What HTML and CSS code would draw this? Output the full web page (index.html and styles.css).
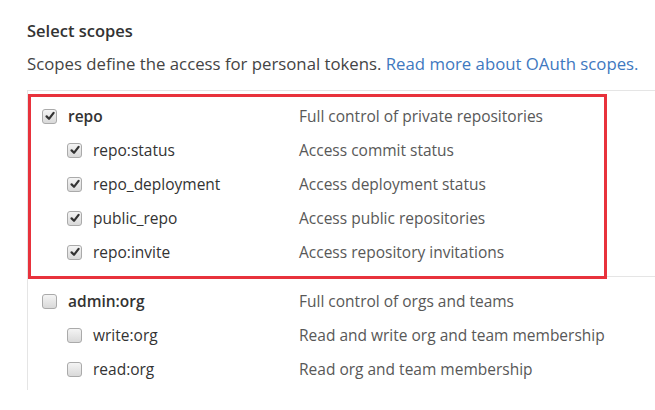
FILE: index.html
```html
<!DOCTYPE html>
<html>
<head>
<meta charset="utf-8">
<link rel="stylesheet" href="styles.css">
</head>
<body>
<div class="page">
  <h3 class="title">Select scopes</h3>
  <p class="intro">Scopes define the access for personal tokens. <a href="#" class="link">Read more about OAuth scopes.</a></p>
  <div class="scopes">
    <div class="group group-highlight">
      <div class="row parent">
        <div class="name"><span class="cb checked"><svg viewBox="0 0 10 10"><path d="M1.6 5.4 L4 7.8 L8.6 1.8" /></svg></span><span class="label">repo</span></div>
        <div class="desc">Full control of private repositories</div>
      </div>
      <div class="row child">
        <div class="name"><span class="cb checked"><svg viewBox="0 0 10 10"><path d="M1.6 5.4 L4 7.8 L8.6 1.8" /></svg></span><span class="label">repo:status</span></div>
        <div class="desc">Access commit status</div>
      </div>
      <div class="row child">
        <div class="name"><span class="cb checked"><svg viewBox="0 0 10 10"><path d="M1.6 5.4 L4 7.8 L8.6 1.8" /></svg></span><span class="label">repo_deployment</span></div>
        <div class="desc">Access deployment status</div>
      </div>
      <div class="row child">
        <div class="name"><span class="cb checked"><svg viewBox="0 0 10 10"><path d="M1.6 5.4 L4 7.8 L8.6 1.8" /></svg></span><span class="label">public_repo</span></div>
        <div class="desc">Access public repositories</div>
      </div>
      <div class="row child">
        <div class="name"><span class="cb checked"><svg viewBox="0 0 10 10"><path d="M1.6 5.4 L4 7.8 L8.6 1.8" /></svg></span><span class="label">repo:invite</span></div>
        <div class="desc">Access repository invitations</div>
      </div>
      <div class="highlight"></div>
    </div>
    <div class="group group-last">
      <div class="row parent">
        <div class="name"><span class="cb"></span><span class="label">admin:org</span></div>
        <div class="desc">Full control of orgs and teams</div>
      </div>
      <div class="row child">
        <div class="name"><span class="cb"></span><span class="label">write:org</span></div>
        <div class="desc">Read and write org and team membership</div>
      </div>
      <div class="row child">
        <div class="name"><span class="cb"></span><span class="label">read:org</span></div>
        <div class="desc">Read org and team membership</div>
      </div>
    </div>
  </div>
</div>
</body>
</html>
```
FILE: styles.css
```css
html, body {
  margin: 0;
  padding: 0;
  background: #fff;
}
body {
  font-family: "Open Sans", "Noto Sans", sans-serif;
  color: #333;
  overflow: hidden;
}
.page {
  padding: 20px 0 0 27px;
}
.title {
  margin: 0;
  font-size: 16.5px;
  font-weight: 600;
  line-height: 22px;
  color: #333;
}
.intro {
  margin: 11px 0 0;
  font-size: 16.75px;
  line-height: 22px;
  color: #444;
  white-space: nowrap;
}
.link {
  color: #4078c0;
  text-decoration: none;
}
.scopes {
  margin-top: 15px;
  border-top: 1px solid #e5e5e5;
  border-left: 1px solid #e5e5e5;
}
.group {
  position: relative;
}
.group-highlight {
  padding: 8px 0 7px;
  border-bottom: 1px solid #e5e5e5;
}
.group-last {
  padding: 7px 0 4px;
}
.highlight {
  position: absolute;
  top: 3px;
  left: 0;
  width: 573px;
  bottom: -3px;
  border: 3px solid #e8323c;
}
.row {
  display: grid;
  grid-template-columns: 271px 1fr;
  align-items: center;
  height: 34px;
}
.name {
  display: flex;
  align-items: center;
  gap: 11px;
  font-size: 15.5px;
}
.parent .name {
  padding-left: 14px;
}
.parent .label {
  font-weight: 600;
}
.child .name {
  padding-left: 39px;
}
.desc {
  font-size: 15.5px;
  color: #585858;
  white-space: nowrap;
}
.cb {
  width: 13px;
  height: 13px;
  border: 1px solid #aaa;
  border-radius: 3px;
  background: linear-gradient(#f4f4f4, #d9d9d9);
  display: flex;
  align-items: center;
  justify-content: center;
  flex: none;
}
.cb svg {
  width: 10px;
  height: 10px;
}
.cb svg path {
  fill: none;
  stroke: #333;
  stroke-width: 2.2;
  stroke-linecap: round;
  stroke-linejoin: round;
}
```
